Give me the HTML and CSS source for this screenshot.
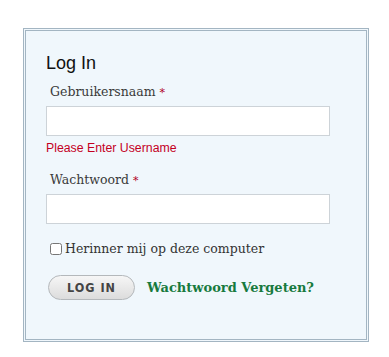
FILE: index.html
```html
<!DOCTYPE html>
<html lang="nl">

<head>
    <meta charset="UTF-8">
    <meta name="viewport" content="width=device-width, initial-scale=1.0">
    <title>Log In</title>
    <link rel="stylesheet" href="styles.css">
</head>

<body>
    <div class="loginBox">
        <h2>Log In</h2>
        <form id="loginForm">
            <div class="form-group">
                <label for="username">Gebruikersnaam <span class="req">*</span></label>
                <input type="text" id="username" name="username">
                <div class="error">Please Enter Username</div>
            </div>
            <div class="form-group">
                <label for="password">Wachtwoord <span class="req">*</span></label>
                <input type="password" id="password" name="password">
            </div>
            <div class="remember">
                <input type="checkbox" id="remember" name="remember">
                <label for="remember">Herinner mij op deze computer</label>
            </div>
            <div class="actions">
                <button type="submit" class="btn">LOG IN</button>
                <a href="#" class="forgot">Wachtwoord Vergeten?</a>
            </div>
        </form>
    </div>
</body>

</html>
```

FILE: styles.css
```css
body {
    margin: 0;
    padding: 28px 0 0 23px;
    background-color: #fff;
    font-family: "DejaVu Serif", Georgia, serif;
}

.loginBox {
    box-sizing: border-box;
    width: 346px;
    height: 314px;
    border: 3px double #a3b5c2;
    background-color: #f0f7fc;
    padding: 22px 20px 0 20px;
}

.loginBox h2 {
    margin: 0 0 10px 0;
    font-family: "Liberation Sans", Arial, sans-serif;
    font-weight: normal;
    font-size: 18px;
    color: #111;
}

.form-group {
    margin-bottom: 17px;
}

.form-group label {
    display: block;
    margin: 0 0 7px 4px;
    font-size: 12.5px;
    color: #3a3a3a;
}

.req {
    color: #b0001e;
    font-size: 11px;
}

.form-group input {
    box-sizing: border-box;
    display: block;
    width: 284px;
    height: 30px;
    border: 1px solid #cdd3d8;
    background-color: #fff;
    margin: 0;
}

.error {
    margin-top: 5px;
    font-family: "Liberation Sans", Arial, sans-serif;
    font-size: 12.3px;
    color: #c4001f;
}

.remember {
    display: flex;
    align-items: center;
    margin: 0 0 19px 4px;
    font-size: 12.5px;
    color: #333;
}

.remember input {
    margin: 0 3px 0 0;
    width: 12px;
    height: 12px;
}

.actions {
    display: flex;
    align-items: center;
    gap: 12px;
    margin-left: 2px;
}

.btn {
    width: 87px;
    height: 25px;
    border: 1px solid #b4b8bb;
    border-radius: 13px;
    background: linear-gradient(#f6f6f6, #dcdcdc);
    font-family: "DejaVu Sans Condensed", "DejaVu Sans", sans-serif;
    font-weight: bold;
    font-size: 12.5px;
    letter-spacing: 1px;
    color: #444;
    cursor: pointer;
}

.forgot {
    font-weight: bold;
    font-size: 13px;
    color: #177a3e;
    text-decoration: none;
}
```
